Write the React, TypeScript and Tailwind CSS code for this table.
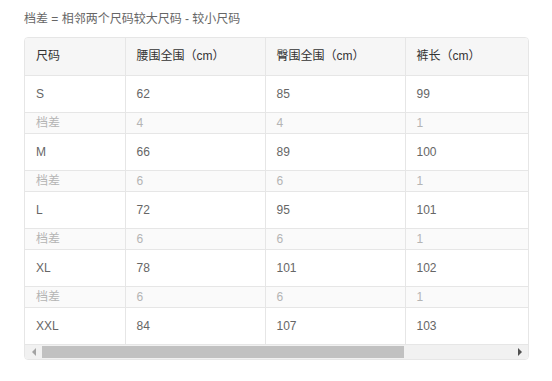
import React from "react";

const rows = [
  { size: "S", waist: "62", hip: "85", length: "99" },
  { size: "档差", waist: "4", hip: "4", length: "1", diff: true },
  { size: "M", waist: "66", hip: "89", length: "100" },
  { size: "档差", waist: "6", hip: "6", length: "1", diff: true },
  { size: "L", waist: "72", hip: "95", length: "101" },
  { size: "档差", waist: "6", hip: "6", length: "1", diff: true },
  { size: "XL", waist: "78", hip: "101", length: "102" },
  { size: "档差", waist: "6", hip: "6", length: "1", diff: true },
  { size: "XXL", waist: "84", hip: "107", length: "103" },
];

const headers = ["尺码", "腰围全围（cm）", "臀围全围（cm）", "裤长（cm）", ""];

const App = () => {
  return (
    <div
      className="w-[552px] h-[381px] bg-white overflow-hidden"
      style={{ fontFamily: '"Liberation Sans", "Noto Sans CJK SC", sans-serif' }}
    >
      <p className="pl-[24px] pt-[11px] h-[37px] text-[12px] leading-[16px] text-[#666]">
        档差 = 相邻两个尺码较大尺码 - 较小尺码
      </p>

      <div className="ml-[24px] w-[505px] border border-[#e6e6e6] rounded-[4px] overflow-hidden">
        <div className="overflow-hidden">
          <table className="w-[664px] table-fixed border-collapse text-[12px]">
            <colgroup>
              <col className="w-[100px]" />
              <col className="w-[140px]" />
              <col className="w-[140px]" />
              <col className="w-[140px]" />
              <col className="w-[144px]" />
            </colgroup>
            <thead>
              <tr className="h-[37px] bg-[#f6f6f6]">
                {headers.map((h, i) => (
                  <th
                    key={i}
                    className={`pl-[11px] text-left font-normal text-[#333] border-b border-[#e6e6e6] ${
                      i > 0 ? "border-l" : ""
                    }`}
                  >
                    {h}
                  </th>
                ))}
              </tr>
            </thead>
            <tbody>
              {rows.map((r, i) => (
                <tr
                  key={i}
                  className={
                    r.diff
                      ? "h-[21px] bg-[#fafafa] text-[#b4b4b4]"
                      : "h-[37px] bg-white text-[#666]"
                  }
                >
                  {[r.size, r.waist, r.hip, r.length, ""].map((v, j) => (
                    <td
                      key={j}
                      className={`pl-[11px] border-[#e6e6e6] ${
                        i < rows.length - 1 ? "border-b" : ""
                      } ${j > 0 ? "border-l" : ""}`}
                    >
                      {v}
                    </td>
                  ))}
                </tr>
              ))}
            </tbody>
          </table>
        </div>

        {/* scrollbar */}
        <div className="h-[15px] bg-[#f1f1f1] flex items-center border-t border-[#e6e6e6]">
          <div className="w-[17px] h-full flex items-center justify-center">
            <span className="w-0 h-0 border-y-[4px] border-y-transparent border-r-[4px] border-r-[#a3a3a3]" />
          </div>
          <div className="w-[362px] h-[12px] bg-[#c1c1c1]" />
          <div className="flex-1" />
          <div className="w-[17px] h-full flex items-center justify-center">
            <span className="w-0 h-0 border-y-[4px] border-y-transparent border-l-[4px] border-l-[#505050]" />
          </div>
        </div>
      </div>
    </div>
  );
};

export default App;
